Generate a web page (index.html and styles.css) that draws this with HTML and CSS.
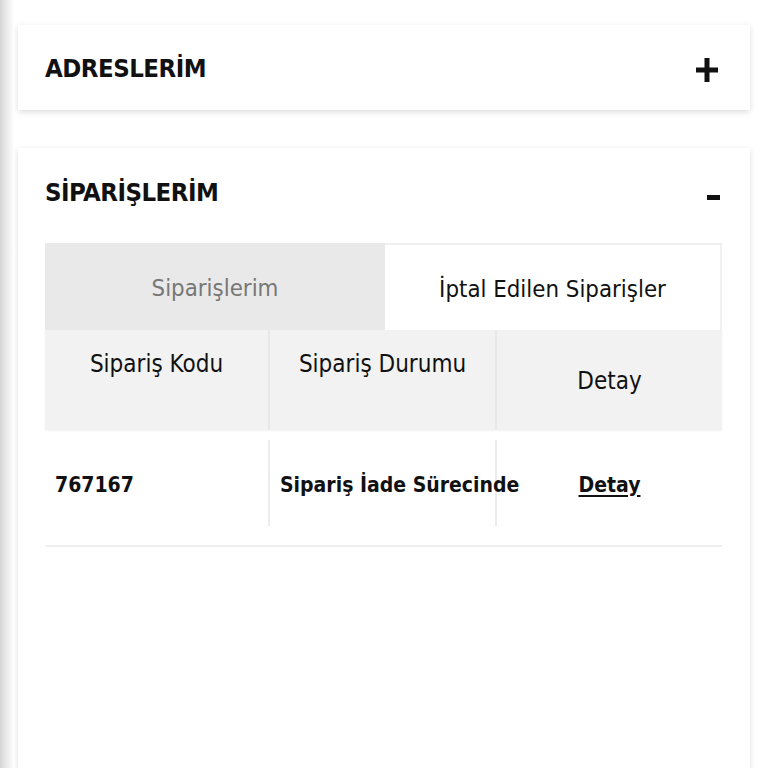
FILE: index.html
```html
<!DOCTYPE html>
<html lang="tr">
<head>
<meta charset="utf-8">
<link rel="stylesheet" href="styles.css">
</head>
<body>
<div class="edge"></div>
<main class="page">
  <section class="card card-closed">
    <div class="card-head">
      <h2 class="title">ADRESLERİM</h2>
      <svg class="plus" width="22" height="24" viewBox="0 0 22 24" aria-label="+"><rect x="8.5" y="0" width="5" height="24" fill="#111"/><rect x="0" y="9.5" width="22" height="5" fill="#111"/></svg>
    </div>
  </section>
  <section class="card card-open">
    <div class="card-head">
      <h2 class="title">SİPARİŞLERİM</h2>
      <span class="minus"></span>
    </div>
    <div class="orders">
      <div class="tabs">
        <div class="tab tab-active">Siparişlerim</div>
        <div class="tab tab-other">İptal Edilen Siparişler</div>
      </div>
      <div class="thead">
        <div class="th th-top">Sipariş Kodu</div>
        <div class="th th-top">Sipariş Durumu</div>
        <div class="th th-mid">Detay</div>
      </div>
      <div class="trow">
        <div class="td td-code">767167</div>
        <div class="td td-status">Sipariş İade Sürecinde</div>
        <div class="td td-link"><a href="#">Detay</a></div>
      </div>
    </div>
  </section>
</main>
</body>
</html>
```
FILE: styles.css
```css
html, body {
  margin: 0;
  padding: 0;
  background: #ffffff;
  height: 768px;
  overflow: hidden;
}
body {
  position: relative;
  font-family: "DejaVu Sans Condensed", "DejaVu Sans", sans-serif;
  color: #111;
}
.edge {
  position: absolute;
  left: 0;
  top: 0;
  width: 14px;
  height: 100%;
  background: linear-gradient(to right, #d4d4d4 0, #e6e6e6 5px, #f3f3f3 10px, #ffffff 14px);
}
.page {
  padding: 25px 18px 0 18px;
  display: flex;
  flex-direction: column;
  gap: 38px;
}
.card {
  background: #fff;
  box-shadow: 0 2px 6px rgba(0, 0, 0, 0.14);
}
.card-closed {
  height: 85px;
}
.card-head {
  display: flex;
  align-items: center;
  justify-content: space-between;
  padding: 0 30px 0 27px;
  height: 85px;
}
.card-open .card-head {
  height: 88px;
}
.title {
  margin: 0;
  font-size: 25.5px;
  font-weight: bold;
  letter-spacing: -0.5px;
}
.plus {
  display: block;
  margin-top: 4px;
  margin-right: 2px;
}
.minus {
  display: block;
  width: 13px;
  height: 5px;
  background: #111;
  margin-top: 10px;
}
.orders {
  margin: 7px 28px 0 27px;
  height: 560px;
}
.tabs {
  display: grid;
  grid-template-columns: 340px 1fr;
  height: 87px;
}
.tab {
  display: flex;
  align-items: center;
  justify-content: center;
  font-size: 23.8px;
  padding-top: 3px;
}
.tab-active {
  background: #e9e9e9;
  color: #777;
}
.tab-other {
  background: #fff;
  color: #111;
  border-top: 2px solid #f0f0f0;
  border-right: 2px solid #f0f0f0;
}
.thead {
  display: grid;
  grid-template-columns: 225px 227px 1fr;
  height: 100px;
  background: #f2f2f2;
  box-shadow: 0 1px 2px rgba(0, 0, 0, 0.06);
}
.th {
  font-size: 24px;
  text-align: center;
  color: #111;
  border-right: 2px solid #e8e8e8;
}
.th:last-child {
  border-right: none;
}
.th-top {
  padding-top: 20px;
}
.th-mid {
  display: flex;
  align-items: center;
  justify-content: center;
  padding-top: 2px;
}
.trow {
  display: grid;
  grid-template-columns: 225px 227px 1fr;
  height: 117px;
  border-bottom: 2px solid #efefef;
  padding: 10px 0 19px 0;
  box-sizing: border-box;
}
.td {
  display: flex;
  align-items: center;
  font-weight: bold;
  font-size: 21px;
  white-space: nowrap;
  padding-top: 4px;
}
.td-code {
  padding-left: 10px;
  border-right: 2px solid #ececec;
}
.td-status {
  padding-left: 10px;
  border-right: 2px solid #ececec;
}
.td-link {
  justify-content: center;
}
.td-link a {
  color: #111;
  text-decoration: underline;
  text-underline-offset: 3px;
  text-decoration-thickness: 2px;
}
```
